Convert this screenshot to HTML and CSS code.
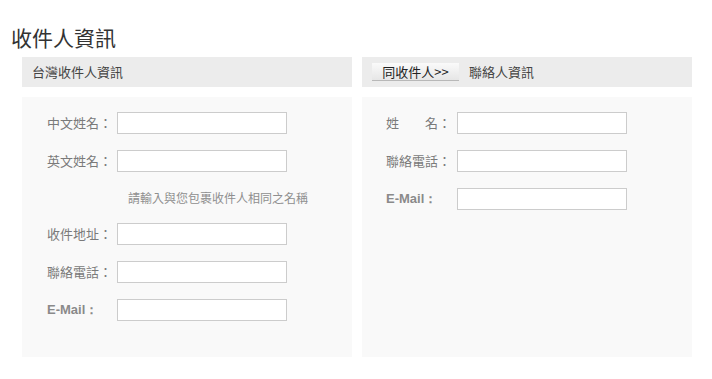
FILE: index.html
```html
<!DOCTYPE html>
<html lang="zh-Hant">
<head>
<meta charset="utf-8">
<title>收件人資訊</title>
<link rel="stylesheet" href="styles.css">
</head>
<body>
<div class="page">
  <h1 class="title">收件人資訊</h1>
  <div class="columns">
    <section class="panel">
      <div class="panel-head">
        <span class="head-text">台灣收件人資訊</span>
      </div>
      <div class="panel-body">
        <div class="row"><label class="label">中文姓名：</label><input class="field" type="text"></div>
        <div class="row"><label class="label">英文姓名：</label><input class="field" type="text"></div>
        <div class="hint">請輸入與您包裹收件人相同之名稱</div>
        <div class="row"><label class="label">收件地址：</label><input class="field" type="text"></div>
        <div class="row"><label class="label">聯絡電話：</label><input class="field" type="text"></div>
        <div class="row"><label class="label label-en">E-Mail：</label><input class="field" type="text"></div>
      </div>
    </section>
    <section class="panel panel-right">
      <div class="panel-head">
        <button class="copy-btn" type="button">同收件人&gt;&gt;</button>
        <span class="head-text">聯絡人資訊</span>
      </div>
      <div class="panel-body">
        <div class="row"><label class="label">姓　　名：</label><input class="field" type="text"></div>
        <div class="row"><label class="label">聯絡電話：</label><input class="field" type="text"></div>
        <div class="row"><label class="label label-en">E-Mail：</label><input class="field" type="text"></div>
      </div>
    </section>
  </div>
</div>
</body>
</html>
```

FILE: styles.css
```css
* { box-sizing: border-box; }
html, body { margin: 0; padding: 0; background: #fff; }
body {
  font-family: "Noto Sans CJK TC", "Noto Sans CJK SC", sans-serif;
  color: #333;
}
.page { width: 712px; height: 379px; overflow: hidden; }
.title {
  margin: 0;
  padding: 22px 0 0 11px;
  height: 53px;
  font-size: 21px;
  line-height: 30px;
  font-weight: normal;
  color: #333;
}
.columns {
  display: flex;
  gap: 10px;
  margin: 4px 0 0 22px;
}
.panel {
  width: 330px;
  display: flex;
  flex-direction: column;
  gap: 10px;
}
.panel-head {
  height: 30px;
  background: #ececec;
  display: flex;
  align-items: center;
  padding-left: 10px;
}
.head-text {
  font-size: 13px;
  line-height: 18px;
  color: #444;
}
.copy-btn {
  height: 18px;
  width: 87px;
  margin: 0 10px 0 0;
  padding: 0;
  border: 0;
  border-bottom: 1px solid #b8b8b8;
  background: linear-gradient(#fafafa, #e6e6e6);
  font-family: "Noto Sans CJK TC", sans-serif;
  font-size: 13px;
  line-height: 17px;
  color: #222;
}
.panel-body {
  height: 260px;
  background: #f9f9f9;
  padding-top: 15px;
  padding-left: 25px;
  display: flex;
  flex-direction: column;
  gap: 16px;
}
.panel-right .panel-body { padding-left: 24px; }
.row {
  display: flex;
  align-items: center;
  height: 22px;
}
.label {
  width: 70px;
  font-size: 13px;
  line-height: 22px;
  color: #7a7a7a;
  white-space: nowrap;
}
.panel-right .label { width: 71px; }
.label-en {
  font-family: "Liberation Sans", Arial, sans-serif;
  font-weight: bold;
  font-size: 13px;
  color: #8a8a8a;
}
.field {
  width: 170px;
  height: 22px;
  margin: 0;
  padding: 0 3px;
  border: 1px solid #cccccc;
  background: #fff;
  font-size: 13px;
}
.hint {
  height: 19px;
  line-height: 19px;
  padding-left: 81px;
  font-size: 12px;
  color: #8f8f8f;
}
```
